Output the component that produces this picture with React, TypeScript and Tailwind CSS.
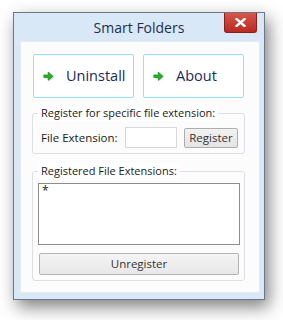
const font = { fontFamily: '"Open Sans", "Noto Sans", sans-serif' };

function Arrow() {
  return (
    <svg width="11" height="11" viewBox="0 0 11 11" className="shrink-0">
      <path d="M1.5 6.6h4.3v2.9L10.3 5.5 5.8 1.5v2.9H1.5z" fill="#000" opacity="0.18" transform="translate(0.6 0.8)" />
      <path d="M0.8 3.9h4.4V1L10 5.2 5.2 9.4V6.5H0.8z" fill="#22b322" stroke="#0f7d12" strokeWidth="0.6" strokeLinejoin="round" />
    </svg>
  );
}

function BigButton({ label }: { label: string }) {
  return (
    <div className="w-[101px] h-[44px] border border-[#93e2f5] rounded-[2px] bg-white flex items-center pl-[9px] gap-[12px] text-[14.5px] text-[#1c2a5a]">
      <Arrow />
      <span>{label}</span>
    </div>
  );
}

function GroupBox({ title, children, className }: { title: string; children: React.ReactNode; className?: string }) {
  return (
    <div className={"relative border border-[#dcdfe3] rounded-[3px] w-[213px] " + (className ?? "")}>
      <div className="absolute -top-[9px] left-[5px] bg-white px-[3px] text-[11px] leading-[16px] text-[#1a1a1a]">{title}</div>
      {children}
    </div>
  );
}

export default function App() {
  return (
    <div className="w-[283px] h-[320px] bg-white pl-[13px] pt-[12px]" style={font}>
      <div className="w-[252px] h-[288px] border border-[#6e7785] bg-[#d9e8f7] flex flex-col shadow-[4px_7px_16px_rgba(0,0,0,0.5)]">
        {/* Title bar */}
        <div className="h-[28px] relative flex items-center justify-center shrink-0">
          <span className="text-[14px] text-[#1e2f4a] mt-[1px]">Smart Folders</span>
          <div className="absolute right-[7px] top-0 w-[33px] h-[20px] bg-gradient-to-b from-[#d9544a] to-[#b72a22] border border-[#8a1f1a] border-t-0 rounded-b-[3px] flex items-center justify-center">
            <svg width="11" height="9" viewBox="0 0 11 9">
              <path d="M1.5 1l8 7M9.5 1l-8 7" stroke="#fff" strokeWidth="2.4" strokeLinecap="square" />
            </svg>
          </div>
        </div>
        {/* Client */}
        <div className="ml-[6px] w-[240px] h-[252px] bg-[#fcfcfc] border border-[#e6ebf1] pl-[12px] pt-[12px] flex flex-col">
          <div className="flex gap-[9px]">
            <BigButton label="Uninstall" />
            <BigButton label="About" />
          </div>
          <GroupBox title="Register for specific file extension:" className="mt-[15px] h-[41px] -ml-[1px]">
            <div className="flex items-center pt-[13px] pl-[8px] text-[11.5px] text-[#1a1a1a]">
              <span className="w-[84px]">File Extension:</span>
              <div className="w-[52px] h-[21px] border border-[#d8d8d8] bg-white" />
              <div className="ml-[7px] w-[54px] h-[20px] border border-[#adadad] rounded-[2px] bg-gradient-to-b from-[#f2f2f2] to-[#e4e4e4] flex items-center justify-center text-[11.5px] text-[#333]">
                Register
              </div>
            </div>
          </GroupBox>
          <GroupBox title="Registered File Extensions:" className="mt-[17px] h-[110px] -ml-[1px]">
            <div className="pt-[11px] pl-[5px]">
              <div className="w-[202px] h-[62px] border border-[#8c8c8c] bg-white pl-[3px] text-[12px] leading-[14px] text-[#222]">*</div>
              <div className="mt-[8px] ml-[1px] w-[200px] h-[22px] border border-[#b3b3b3] rounded-[2px] bg-gradient-to-b from-[#f4f4f4] to-[#e8e8e8] flex items-center justify-center text-[11.5px] text-[#333]">
                Unregister
              </div>
            </div>
          </GroupBox>
        </div>
      </div>
    </div>
  );
}
